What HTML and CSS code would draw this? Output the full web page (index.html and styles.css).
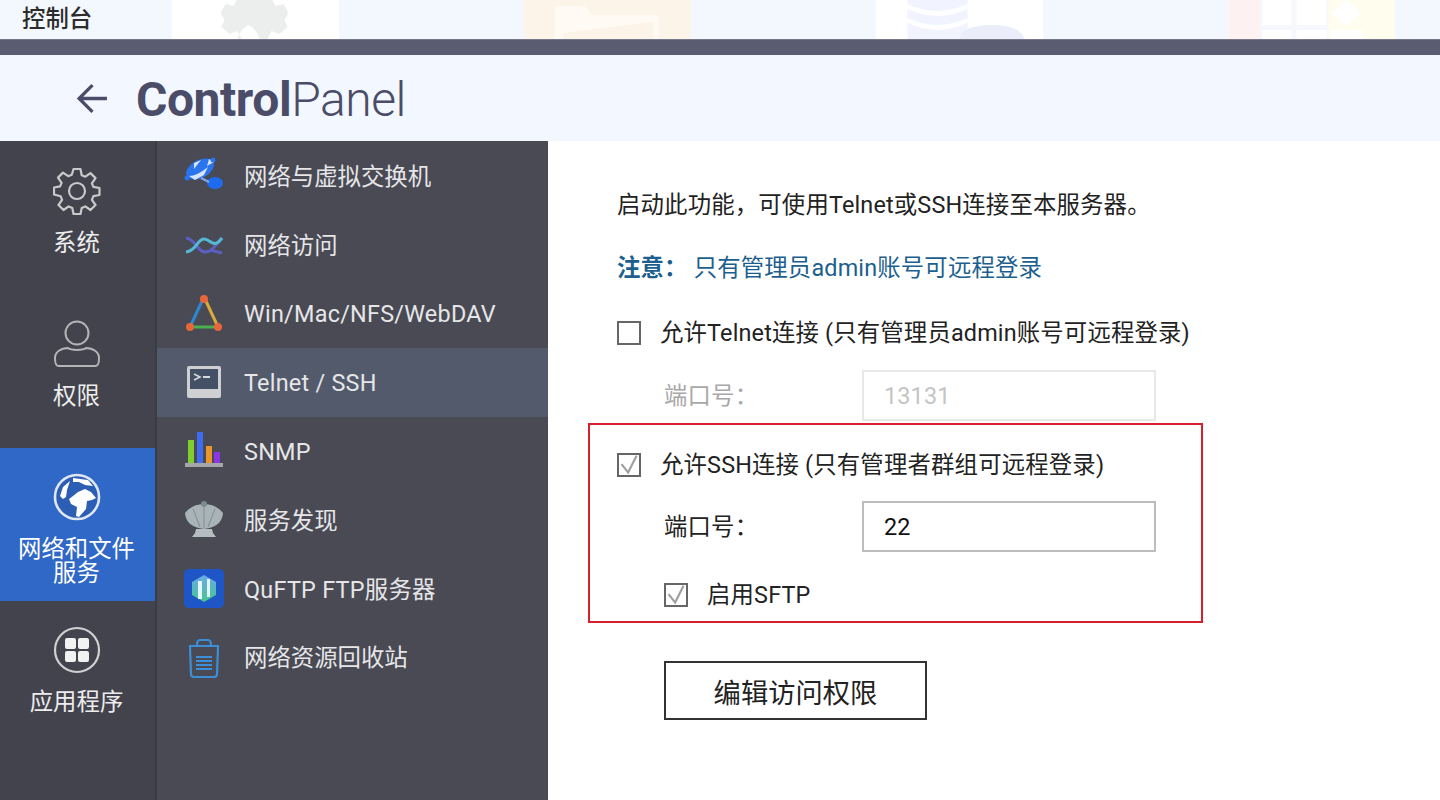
FILE: index.html
```html
<!DOCTYPE html>
<html lang="zh-CN">
<head>
    <meta charset="UTF-8">
    <title>控制台</title>
    <link rel="stylesheet" href="styles.css">
</head>
<body>
    <div class="desktop">
        <span class="desktop-title">控制台</span>
        <div class="tile">
            <svg viewBox="0 0 166 39"><path d="M69 39l-4-8-8 3-8-7 3-7-4-7 5-9 8 2 3-6h36l3 6 8-2 5 9-4 7 3 7-8 7-8-3-4 8h-8a22 22 0 0 0-11-14 22 22 0 0 0-11 14z" fill="#eceeed"/></svg>
        </div>
        <div class="tile tile-folder">
            <svg viewBox="0 0 166 39"><path d="M30 39V10q0-4 4-4h26l8 9h62q4 0 4 5v19h-5V24q0-2-2-2l-88 11v6z" fill="#fffaf4"/></svg>
        </div>
        <div class="tile">
            <svg viewBox="0 0 166 39"><path d="M31 0h60v39H31z" fill="#f1f4fe"/><path d="M31 4q30 14 60 0v5q-30 14-60 0zM31 18q30 14 60 0v5q-30 14-60 0z" fill="#fff"/><path d="M83 39q3-14 32-14t33 14z" fill="#ebeefa"/></svg>
        </div>
        <div class="tile tile-apps">
            <svg viewBox="0 0 166 39"><path d="M0 0h32v39H0z" fill="#fdf1f2"/><path d="M100 0h68v39h-68z" fill="#fffdee"/><path d="M34 0h29v25H34zM68 0h30v25H68zM34 30h29v9H34zM68 30h30v9H68zM102 30h32v9h-32z" fill="#fff"/><path d="M118 0l-15 13 15 13 15-13-15-13z" fill="#fff"/></svg>
        </div>
    </div>
    <div class="title-strip"></div>

    <header class="app-header">
        <svg class="back-arrow" viewBox="0 0 32 32"><path d="M30 16H3M16 3 3 16l13 13" fill="none" stroke="#4b4d68" stroke-width="3.200"/></svg>
        <h1 class="app-title"><b>Control</b>Panel</h1>
    </header>

    <div class="app-body">
        <nav class="rail">
            <div class="rail-item">
                <svg class="rail-icon" viewBox="0 0 48 48"><path d="M20.500 2h7l1.200 6.200 3.600 1.500 5.200-3.600 5 5-3.600 5.200 1.500 3.600 6.100 1.100v7l-6.100 1.200-1.500 3.600 3.600 5.200-5 5-5.200-3.600-3.600 1.500-1.200 6.100h-7l-1.200-6.100-3.600-1.500-5.200 3.600-5-5 3.600-5.200-1.500-3.600L1 27.500v-7l6.100-1.100 1.500-3.600L5 10.600l5-5 5.200 3.600 3.600-1.500z" fill="none" stroke="#c9c9cc" stroke-width="2.200" stroke-linejoin="round"/><circle cx="24" cy="24" r="8" fill="none" stroke="#c9c9cc" stroke-width="2.200"/></svg>
                <span>系统</span>
            </div>
            <div class="rail-item">
                <svg class="rail-icon" viewBox="0 0 48 48"><circle cx="24" cy="13" r="11.500" fill="none" stroke="#b4b4b8" stroke-width="2"/><path d="M15 28c3 2.500 15 2.500 18 0 7 0 13 4 13 10 0 6-1 8-4 8H6c-3 0-4-2-4-8 0-6 6-10 13-10z" fill="none" stroke="#b4b4b8" stroke-width="2" stroke-linejoin="round"/></svg>
                <span>权限</span>
            </div>
            <div class="rail-item rail-active">
                <svg class="rail-icon" viewBox="0 0 48 48"><circle cx="24" cy="24" r="22" fill="#2c5fb3" stroke="#dfe6f5" stroke-width="2.600"/><path d="M25 19l7-3 6 3 5 6-4 2-5 1-1 8-7 8-3-1 1-9-6-3-2-5 4-3zM10 14l7-6-3 9-1 7-3 2-3-3zM20 5l15 2 5 6-8-1-6-3-6 0z" fill="#fff"/></svg>
                <span>网络和文件<br>服务</span>
            </div>
            <div class="rail-item">
                <svg class="rail-icon" viewBox="0 0 48 48"><circle cx="24" cy="24" r="22" fill="none" stroke="#d0d0d3" stroke-width="2.200"/><path d="M12 14q0-2 2-2h7q2 0 2 2v7q0 2-2 2h-7q-2 0-2-2zM25 14q0-2 2-2h7q2 0 2 2v7q0 2-2 2h-7q-2 0-2-2zM12 27q0-2 2-2h7q2 0 2 2v7q0 2-2 2h-7q-2 0-2-2zM25 27q0-2 2-2h7q2 0 2 2v7q0 2-2 2h-7q-2 0-2-2z" fill="#f2f2f3"/></svg>
                <span>应用程序</span>
            </div>
        </nav>

        <ul class="sub-menu">
            <li class="sub-item">
                <svg class="sub-icon" viewBox="0 0 40 40"><ellipse cx="16" cy="13" rx="15" ry="9" transform="rotate(-28 16 13)" fill="#2a74ee"/><path d="M5 20q8 0 19-9l-4 8-9 5zM10 7l7-3-7 9zM25 3l5 3-7 4z" fill="#d5e4fb"/><circle cx="29" cy="4" r="2.500" fill="#2a74ee"/><circle cx="3" cy="22" r="2.500" fill="#2a74ee"/><ellipse cx="31" cy="27" rx="8" ry="6" fill="#1f6bf0"/><path d="M17 22l8 4" stroke="#7ea8ee" stroke-width="2"/></svg>
                <span>网络与虚拟交换机</span>
            </li>
            <li class="sub-item">
                <svg class="sub-icon" viewBox="0 0 40 40"><path d="M2 13c10 1 11 14 19 14s9-6 17-14" fill="none" stroke="#5b5fc0" stroke-width="3"/><path d="M2 27c11-1 11-13 18-13s9 11 18-1" fill="none" stroke="#55b9d6" stroke-width="3"/><path d="M26 25l12 3" fill="none" stroke="#5b5fc0" stroke-width="3"/></svg>
                <span>网络访问</span>
            </li>
            <li class="sub-item latin">
                <svg class="sub-icon" viewBox="0 0 40 40"><path d="M19 5 6 33" stroke="#2f86d0" stroke-width="3"/><path d="M21 5l13 28" stroke="#d9a93a" stroke-width="3"/><path d="M6 33h28" stroke="#4bb04f" stroke-width="3"/><circle cx="20" cy="5" r="4" fill="#e8663a"/><circle cx="6" cy="33" r="4" fill="#e8663a"/><circle cx="34" cy="33" r="4" fill="#e8663a"/></svg>
                <span>Win/Mac/NFS/WebDAV</span>
            </li>
            <li class="sub-item sub-active latin">
                <svg class="sub-icon" viewBox="0 0 40 40"><rect x="3" y="3" width="34" height="32" rx="2" fill="#cfd0d2"/><path d="M6 6h28v20H6z" fill="#445066"/><path d="M10 11l6 3-6 3" fill="none" stroke="#d8d9db" stroke-width="1.600"/><path d="M19 14h7" stroke="#d8d9db" stroke-width="2"/></svg>
                <span>Telnet / SSH</span>
            </li>
            <li class="sub-item latin">
                <svg class="sub-icon" viewBox="0 0 40 40"><path d="M4 8h6v23H4z" fill="#7fcf2f"/><path d="M13 0h6v31h-6z" fill="#3f6bf0"/><path d="M22 14h6v17h-6z" fill="#e8952c"/><path d="M30 20h6v11h-6z" fill="#8f35e8"/><path d="M1 31h38v4H1z" fill="#a5a6aa"/></svg>
                <span>SNMP</span>
            </li>
            <li class="sub-item">
                <svg class="sub-icon" viewBox="0 0 40 40"><path d="M1 13Q8 4 20 4t19 9q-1 14-19 16Q2 27 1 13z" fill="#a9b4b8"/><path d="M9 9l7 18M20 6v22M31 9l-7 18" stroke="#8a9599" stroke-width="1.200"/><circle cx="20" cy="4" r="3" fill="#7d8a8e"/><path d="M12 29h16l1 4 3 4H8l3-4z" fill="#b6bdc0"/></svg>
                <span>服务发现</span>
            </li>
            <li class="sub-item latin">
                <svg class="sub-icon" viewBox="0 0 40 40"><defs><linearGradient id="ftpFill" x1="0" y1="0" x2="0" y2="1"><stop offset="0" stop-color="#6aa8ee"/><stop offset="1" stop-color="#45c88a"/></linearGradient></defs><rect width="40" height="39" rx="5" fill="#1e56c8"/><path d="M20 6l12 7v13l-12 7-12-7V13z" fill="url(#ftpFill)"/><path d="M14 12h4v18h-4zM23 10h3v18h-3z" fill="#e8f5ff"/></svg>
                <span>QuFTP FTP服务器</span>
            </li>
            <li class="sub-item">
                <svg class="sub-icon tall-icon" viewBox="0 0 40 42"><path d="M5 9h30M13 8q0-5 3-5h8q3 0 3 5" fill="none" stroke="#3c8fd6" stroke-width="2.200"/><path d="M6 10l1 27q0 3 3 3h20q3 0 3-3l1-27" fill="none" stroke="#3c8fd6" stroke-width="2.200"/><path d="M12 20h16M12 24h16M12 28h16M12 32h16" stroke="#3c8fd6" stroke-width="1.800"/></svg>
                <span>网络资源回收站</span>
            </li>
        </ul>

        <main class="content">
            <p class="intro">启动此功能，可使用Telnet或SSH连接至本服务器。</p>
            <p class="note"><b>注意：</b><span>只有管理员admin账号可远程登录</span></p>

            <div class="check-row telnet-row">
                <span class="check"></span>
                <span>允许Telnet连接 (只有管理员admin账号可远程登录)</span>
            </div>
            <div class="port-row port-disabled">
                <span class="port-label">端口号：</span>
                <input class="port-input" type="text" value="13131" disabled>
            </div>

            <section class="highlight">
                <div class="check-row">
                    <span class="check">
                        <svg viewBox="0 0 24 24"><path d="M3 11l8 10L21 1" fill="none" stroke="#a0a0a0" stroke-width="2.600"/></svg>
                    </span>
                    <span>允许SSH连接 (只有管理者群组可远程登录)</span>
                </div>
                <div class="port-row">
                    <span class="port-label">端口号：</span>
                    <input class="port-input" type="text" value="22">
                </div>
                <div class="check-row sftp-row">
                    <span class="check">
                        <svg viewBox="0 0 24 24"><path d="M3 11l8 10L21 1" fill="none" stroke="#a0a0a0" stroke-width="2.600"/></svg>
                    </span>
                    <span>启用SFTP</span>
                </div>
            </section>

            <button class="edit-btn" type="button">编辑访问权限</button>
        </main>
    </div>
</body>
</html>
```

FILE: styles.css
```css
* {
    box-sizing: border-box;
}
html, body {
    margin: 0;
    height: 800px;
    overflow: hidden;
}
body {
    font-family: Roboto, "Noto Sans CJK SC", sans-serif;
    background: white;
    color: #222;
}
.desktop {
    height: 39px;
    background: #f3f7fe;
    display: flex;
    gap: 185px;
    padding-left: 172px;
    position: relative;
    overflow: hidden;
}
.desktop-title {
    position: absolute;
    left: 22px;
    top: 3px;
    font-size: 23.4px;
    line-height: 32px;
    font-weight: 500;
    color: #2c2c2c;
}
.tile {
    width: 167px;
    height: 39px;
    flex: none;
    background: white;
}
.tile svg {
    display: block;
    width: 100%;
    height: 100%;
}
.tile-folder {
    background: #fdf4e9;
}
.tile-apps {
    background: #f6f8fe;
}
.title-strip {
    height: 16px;
    background: #5a5c72;
    border-top: 1px solid #77798a;
}
.app-header {
    height: 86px;
    background: #f3f7ff;
    display: flex;
    align-items: center;
    padding-left: 76px;
    gap: 27px;
}
.back-arrow {
    width: 33px;
    height: 33px;
}
.app-title {
    margin: 2px 0 0;
    font-size: 48px;
    font-weight: 300;
    color: #4a4c68;
    letter-spacing: -0.45px;
}
.app-title b {
    font-weight: 700;
}
.app-body {
    display: flex;
    height: 659px;
}
.rail {
    width: 157px;
    flex: none;
    background: #42434c;
    border-right: 2px solid #3a3b43;
    padding-top: 1px;
}
.rail-item {
    height: 153px;
    padding: 25px 2px 0 0;
    display: flex;
    flex-direction: column;
    align-items: center;
    text-align: center;
    font-size: 23.4px;
    line-height: 24px;
    color: #ededee;
}
.rail-item span {
    margin-top: 16px;
}
.rail-icon {
    width: 48px;
    height: 48px;
}
.rail-active {
    background: #2f68c6;
    color: white;
}
.sub-menu {
    width: 391px;
    flex: none;
    margin: 0;
    padding: 1px 0 0;
    list-style: none;
    background: #494a54;
}
.sub-item {
    height: 68.8px;
    display: flex;
    align-items: center;
    padding-left: 27px;
    gap: 20px;
    font-size: 23.4px;
    line-height: 30px;
    color: #e6e6e8;
}
.sub-item span {
    padding-top: 1px;
}
.latin {
    letter-spacing: 0.25px;
}
.sub-active {
    background: #535a6c;
}
.sub-icon {
    width: 40px;
    height: 40px;
    flex: none;
}
.tall-icon {
    height: 42px;
}
.content {
    flex: 1;
    padding: 47px 0 0 69px;
    font-size: 23.4px;
    letter-spacing: 0.16px;
    line-height: 34px;
}
.intro, .note {
    margin: 0;
}
.note {
    margin-top: 29px;
    color: #1c5f8e;
    display: flex;
    gap: 6px;
}
.note b {
    font-weight: 700;
}
.check-row {
    display: flex;
    align-items: center;
    gap: 19px;
    height: 34px;
}
.telnet-row {
    margin-top: 31px;
}
.check {
    width: 24px;
    height: 24px;
    border: 2.5px solid #666;
    flex: none;
}
.check svg {
    display: block;
    width: 100%;
    height: 100%;
    overflow: visible;
}
.port-row {
    display: flex;
    align-items: center;
    margin: 20px 0 0 47px;
}
.port-label {
    width: 198px;
}
.port-disabled .port-label {
    color: #a8a8a8;
}
.port-input {
    width: 294px;
    height: 51px;
    padding: 0 20px;
    font: inherit;
    letter-spacing: inherit;
    color: #111;
    background: white;
    border: 2px solid #bdbdbd;
    outline: none;
}
.port-disabled .port-input {
    color: #c4c4c4;
    border: 2px solid #e8e8e8;
}
.highlight {
    width: 615px;
    height: 200px;
    margin: 2px 0 0 -29px;
    padding: 23px 0 0 27px;
    border: 2px solid #d6202c;
}
.highlight .port-row {
    margin-top: 19px;
}
.sftp-row {
    margin: 26px 0 0 47px;
    gap: 19px;
}
.edit-btn {
    display: block;
    width: 263px;
    height: 59px;
    margin: 38px 0 0 47px;
    padding: 0;
    font-family: inherit;
    font-size: 27.3px;
    color: #222;
    background: white;
    border: 2px solid #333;
}
```
